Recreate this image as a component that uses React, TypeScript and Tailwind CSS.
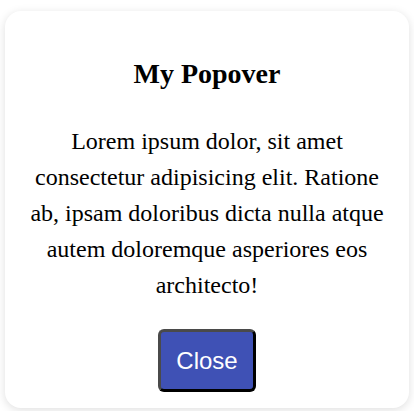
import React from "react";

export default function App() {
  return (
    <div className="w-[414px] h-[411px] overflow-hidden bg-white px-[5px] pt-[11px]">
      <div className="bg-white rounded-[16px] shadow-[0_2px_10px_rgba(0,0,0,0.13)] flex flex-col items-center text-center pt-[47px] pb-[16px] px-[20px] text-black">
        <h2 className="font-['Liberation_Serif',serif] font-bold text-[28px] leading-[32px]">My Popover</h2>
        <p className="mt-[33px] font-['Liberation_Serif',serif] text-[24px] leading-[36px]">
          Lorem ipsum dolor, sit amet consectetur adipisicing elit. Ratione ab, ipsam doloribus dicta nulla atque autem doloremque asperiores eos architecto!
        </p>
        <button className="mt-[26px] bg-[#3f51b5] text-white font-['Liberation_Sans',Arial,sans-serif] text-[24px] leading-[27px] px-[15px] py-[15px] rounded-[6px] border-[3px] border-t-[#4a4a4a] border-l-[#4a4a4a] border-b-black border-r-black">
          Close
        </button>
      </div>
    </div>
  );
}
